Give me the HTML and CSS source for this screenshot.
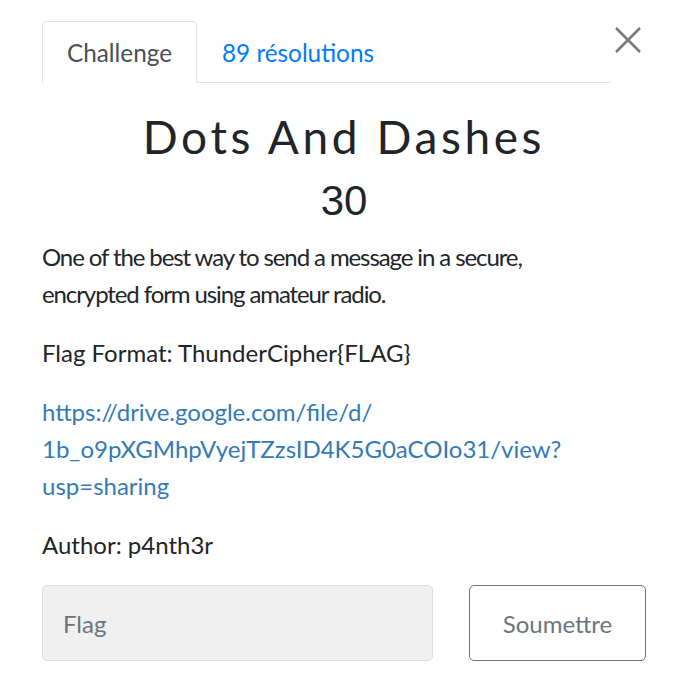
FILE: index.html
```html
<!DOCTYPE html>
<html>
<head>
<meta charset="utf-8">
<link rel="stylesheet" href="styles.css">
</head>
<body>
<div class="modal">
  <div class="top">
    <ul class="tabs">
      <li class="tab active">Challenge</li>
      <li class="tab link">89 résolutions</li>
    </ul>
    <button class="close" aria-label="Close">
      <svg width="26" height="26" viewBox="0 0 26 26"><path d="M1 1 L25 25 M25 1 L1 25" stroke="#7a7a7a" stroke-width="2.6" fill="none"/></svg>
    </button>
  </div>
  <h2 class="title">Dots And Dashes</h2>
  <h3 class="value">30</h3>
  <div class="desc">
    <p class="lead">One of the best way to send a message in a secure, encrypted form using amateur radio.</p>
    <p>Flag Format: ThunderCipher{FLAG}</p>
    <p><a href="#">https://drive.google.com/file/d/<br>1b_o9pXGMhpVyejTZzsID4K5G0aCOIo31/view?<br>usp=sharing</a></p>
    <p>Author: p4nth3r</p>
  </div>
  <div class="form">
    <input class="flag" type="text" placeholder="Flag">
    <button class="submit">Soumettre</button>
  </div>
</div>
</body>
</html>
```

FILE: styles.css
```css
html, body {
  margin: 0;
  padding: 0;
  background: #fff;
}
body {
  font-family: Lato, "Noto Sans", sans-serif;
  color: #212529;
}
.modal {
  padding: 21px 30px 0 42px;
}
.top {
  display: flex;
  align-items: flex-start;
}
.tabs {
  list-style: none;
  margin: 0;
  padding: 0;
  display: flex;
  width: 568px;
  border-bottom: 1px solid #dee2e6;
}
.tab {
  font-size: 24.3px;
  height: 60px;
  line-height: 62px;
  padding: 0 24px;
  border: 1px solid transparent;
  border-top-left-radius: 5px;
  border-top-right-radius: 5px;
  margin-bottom: -1px;
}
.tab.active {
  color: #495057;
  border-color: #dee2e6 #dee2e6 #fff;
  background: #fff;
}
.tab.link {
  color: #007bff;
}
.close {
  margin: 6px 0 0 5px;
  padding: 0;
  border: 0;
  background: none;
  width: 26px;
  height: 26px;
}
.close svg { display: block; }
.title {
  margin: 26px 0 0;
  text-align: center;
  font-weight: 400;
  font-size: 46px;
  letter-spacing: 3.6px;
  line-height: 56px;
  width: 604px;
}
.value {
  margin: 10px 0 0;
  text-align: center;
  font-family: "Liberation Sans", Arial, sans-serif;
  font-weight: 400;
  font-size: 42px;
  line-height: 52px;
  width: 604px;
}
.desc {
  font-size: 24px;
  line-height: 37px;
  margin-top: 11px;
  width: 560px;
}
.desc p {
  margin: 0 0 22px;
}
.desc .lead {
  letter-spacing: -1.1px;
}
.desc a {
  color: #337ab7;
  text-decoration: none;
}
.form {
  display: flex;
  gap: 36px;
  margin-top: 0;
}
.flag {
  box-sizing: border-box;
  width: 391px;
  height: 76px;
  background: #f0f0f0;
  border: 1px solid #dcdcdc;
  border-radius: 5px;
  padding: 0 20px;
  font-family: Lato, sans-serif;
  font-size: 24px;
  color: #495057;
}
.flag::placeholder { color: #6c757d; }
.submit {
  box-sizing: border-box;
  width: 177px;
  height: 76px;
  background: #fff;
  border: 1px solid #6c757d;
  border-radius: 5px;
  font-family: Lato, sans-serif;
  font-size: 24px;
  color: #6c757d;
}
```
